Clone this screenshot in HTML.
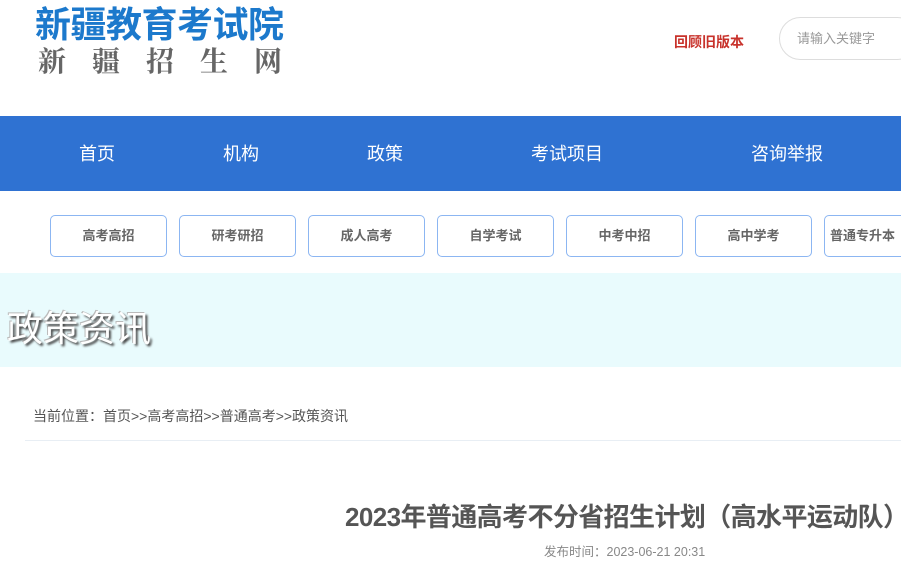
<!DOCTYPE html>
<html><head><meta charset="utf-8"><style>
*{margin:0;padding:0;box-sizing:border-box}
body{width:901px;height:561px;overflow:hidden;background:#fff;font-family:"Liberation Sans","Noto Sans CJK SC",sans-serif;position:relative}
.a{position:absolute;white-space:nowrap}
.nav{position:absolute;left:0;top:116px;width:901px;height:75px;background:#2f72d2}
.nav span{position:absolute;top:24px;color:#fff;font-size:18px;transform:translateX(-50%)}
.btn{position:absolute;top:215px;width:117px;height:42px;border:1px solid #8cb6f2;border-radius:5px;color:#666;font-size:13px;font-weight:bold;text-align:center;line-height:40px}
</style></head><body>
<div class="a" style="left:35px;top:-4px;font-size:36px;font-weight:bold;color:#1c79cc;letter-spacing:-0.5px">新疆教育考试院</div>
<div class="a" style="left:38px;top:40px;font-size:28px;color:#666;font-family:'Noto Serif CJK SC',serif;font-weight:bold;letter-spacing:26px">新疆招生网</div>
<div class="a" style="left:674px;top:32px;font-size:14px;color:#c8322b;font-weight:bold">回顾旧版本</div>
<div class="a" style="left:779px;top:17px;width:140px;height:43px;border:1px solid #ddd;border-radius:22px;padding-left:17px;line-height:41px;font-size:13px;color:#999">请输入关键字</div>
<div class="nav"><span style="left:97px">首页</span><span style="left:241px">机构</span><span style="left:385px">政策</span><span style="left:567px">考试项目</span><span style="left:787px">咨询举报</span></div>
<div class="btn" style="left:50px">高考高招</div>
<div class="btn" style="left:179px">研考研招</div>
<div class="btn" style="left:308px">成人高考</div>
<div class="btn" style="left:437px">自学考试</div>
<div class="btn" style="left:566px">中考中招</div>
<div class="btn" style="left:695px">高中学考</div>
<div class="btn" style="left:824px;text-align:left;padding-left:5px">普通专升本</div>
<div class="a" style="left:0;top:273px;width:901px;height:94px;background:#e9fbfd"></div>
<div class="a" style="left:7px;top:300px;font-size:36px;color:#fff;text-shadow:2px 2px 2px #444,-1px -1px 0 #bbb">政策资讯</div>
<div class="a" style="left:33px;top:406px;font-size:14px;color:#555">当前位置：首页&gt;&gt;高考高招&gt;&gt;普通高考&gt;&gt;政策资讯</div>
<div class="a" style="left:25px;top:440px;width:876px;height:1px;background:#e8eef4"></div>
<div class="a" style="left:345px;top:497px;font-size:26px;font-weight:bold;color:#555;letter-spacing:-0.6px">2023年普通高考不分省招生计划（高水平运动队）</div>
<div class="a" style="left:544px;top:541px;font-size:12.5px;color:#888">发布时间：2023-06-21 20:31</div>
</body></html>
